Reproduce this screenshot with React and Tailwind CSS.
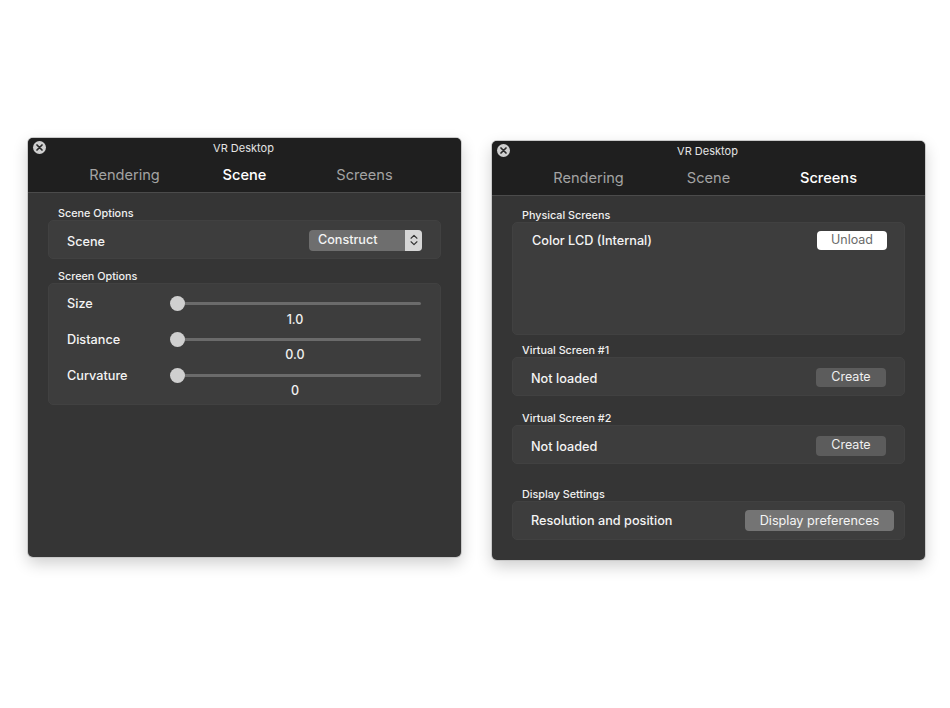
import { ChevronsUpDown } from 'lucide-react';

const tabs = ['Rendering', 'Scene', 'Screens'];

function Slider({ label, value, valueClass }) {
    return (
        <div className="h-[36px] relative">
            <div className="flex items-center h-[20px]">
                <span className="w-[111px] text-[12.7px] font-medium text-[#f4f4f4]">{label}</span>
                <div className="relative w-[243px] h-[3px] -mt-[2px] rounded-full bg-[#6b6b6b]">
                    <div className="absolute -left-[8px] -top-[6px] w-[15px] h-[15px] rounded-full bg-[#cfcfcf]" />
                </div>
            </div>
            <div className={`w-[345px] pl-[111px] flex justify-center text-[12.5px] font-medium leading-[14px] text-[#f0f0f0] ${valueClass}`}>
                {value}
            </div>
        </div>
    );
}

function Section({ title, className, children }) {
    return (
        <section className={className}>
            <h2 className="pl-[10px] h-[15px] leading-[15px] text-[10.8px] font-medium text-[#f0f0f0]">{title}</h2>
            <div className="mt-[-1px] rounded-[5px] border border-[#414141] bg-[#3d3d3d]">{children}</div>
        </section>
    );
}

function Window({ active, className, children }) {
    return (
        <div className={`relative w-[433px] h-[419px] rounded-[5px] bg-[#353535] overflow-hidden shadow-[0_0_0_1px_#c9c9c9,0_6px_16px_rgba(0,0,0,0.2)] ${className}`}>
            <header className="h-[55px] bg-[#1f1f1f] border-b border-[#4b4b4b]">
                <div className="absolute left-[5px] top-[3px] w-[13px] h-[13px] rounded-full bg-[#cfcfcf] flex items-center justify-center">
                    <svg width="7" height="7" viewBox="0 0 7 7" stroke="#2a2a2a" strokeWidth="1.7" strokeLinecap="round">
                        <path d="M1 1l5 5M6 1l-5 5" />
                    </svg>
                </div>
                <div className="pt-[3px] pr-[2px] text-center text-[11px] leading-[14px] text-[#e4e4e4]">VR Desktop</div>
                <nav className="mt-[10px] flex justify-center">
                    {tabs.map((t) => (
                        <span
                            key={t}
                            className={`w-[120px] text-center text-[14.6px] leading-[20px] ${t === active ? 'text-white font-medium' : 'text-[#a3a3a3]'}`}
                        >
                            {t}
                        </span>
                    ))}
                </nav>
            </header>
            <div className="px-[20px]">{children}</div>
        </div>
    );
}

function Row({ label, children }) {
    return (
        <div className="h-[37px] pl-[18px] pr-[18px] flex items-center justify-between text-[12.7px] font-medium text-[#f4f4f4]">
            <span className="mt-[4px]">{label}</span>
            {children}
        </div>
    );
}

export default function App() {
    return (
        <div className="min-h-screen w-full bg-white flex items-start gap-[31px] pl-[28px] font-['Inter',sans-serif]">
            <Window active="Scene" className="mt-[138px]">
                <Section title="Scene Options" className="mt-[13px]">
                    <Row label="Scene">
                        <div className="w-[113px] h-[21px] mt-[1px] rounded-[4px] bg-[#6e6e6e] flex items-center overflow-hidden">
                            <span className="flex-1 pl-[9px] text-[12.6px] font-medium text-[#f4f4f4]">Construct</span>
                            <span className="w-[17px] h-full bg-[#d6d6d6] flex items-center justify-center">
                                <ChevronsUpDown size={14} strokeWidth={2} color="#333333" />
                            </span>
                        </div>
                    </Row>
                </Section>
                <Section title="Screen Options" className="mt-[10px]">
                    <div className="h-[120px] pl-[18px] pt-[10px]">
                        <Slider label="Size" value="1.0" valueClass="-mt-[1px]" />
                        <Slider label="Distance" value="0.0" valueClass="-mt-[2px]" />
                        <Slider label="Curvature" value="0" valueClass="-mt-[2px]" />
                    </div>
                </Section>
            </Window>

            <Window active="Screens" className="mt-[141px]">
                <Section title="Physical Screens" className="mt-[12px]">
                    <div className="h-[111px] pl-[19px] pr-[17px] pt-[8px] flex items-start justify-between text-[12.7px] font-medium text-[#f4f4f4]">
                        <span>Color LCD (Internal)</span>
                        <button className="w-[70px] h-[19px] rounded-[4px] bg-white text-[12.5px] font-normal text-[#6a6a6a]">Unload</button>
                    </div>
                </Section>
                <Section title="Virtual Screen #1" className="mt-[8px]">
                    <Row label="Not loaded">
                        <button className="w-[70px] h-[19px] mt-[1px] rounded-[4px] bg-[#5c5c5c] text-[12.5px] font-normal text-[#f0f0f0]">Create</button>
                    </Row>
                </Section>
                <Section title="Virtual Screen #2" className="mt-[15px]">
                    <Row label="Not loaded">
                        <button className="w-[70px] h-[20px] mt-[2px] rounded-[4px] bg-[#5c5c5c] text-[12.5px] font-normal text-[#f0f0f0]">Create</button>
                    </Row>
                </Section>
                <Section title="Display Settings" className="mt-[23px]">
                    <div className="h-[37px] pl-[18px] pr-[10px] flex items-center justify-between text-[12.7px] font-medium text-[#f4f4f4]">
                        <span>Resolution and position</span>
                        <button className="w-[149px] h-[21px] rounded-[4px] bg-[#747474] text-[12.7px] font-normal text-[#f4f4f4]">Display preferences</button>
                    </div>
                </Section>
            </Window>
        </div>
    );
}
